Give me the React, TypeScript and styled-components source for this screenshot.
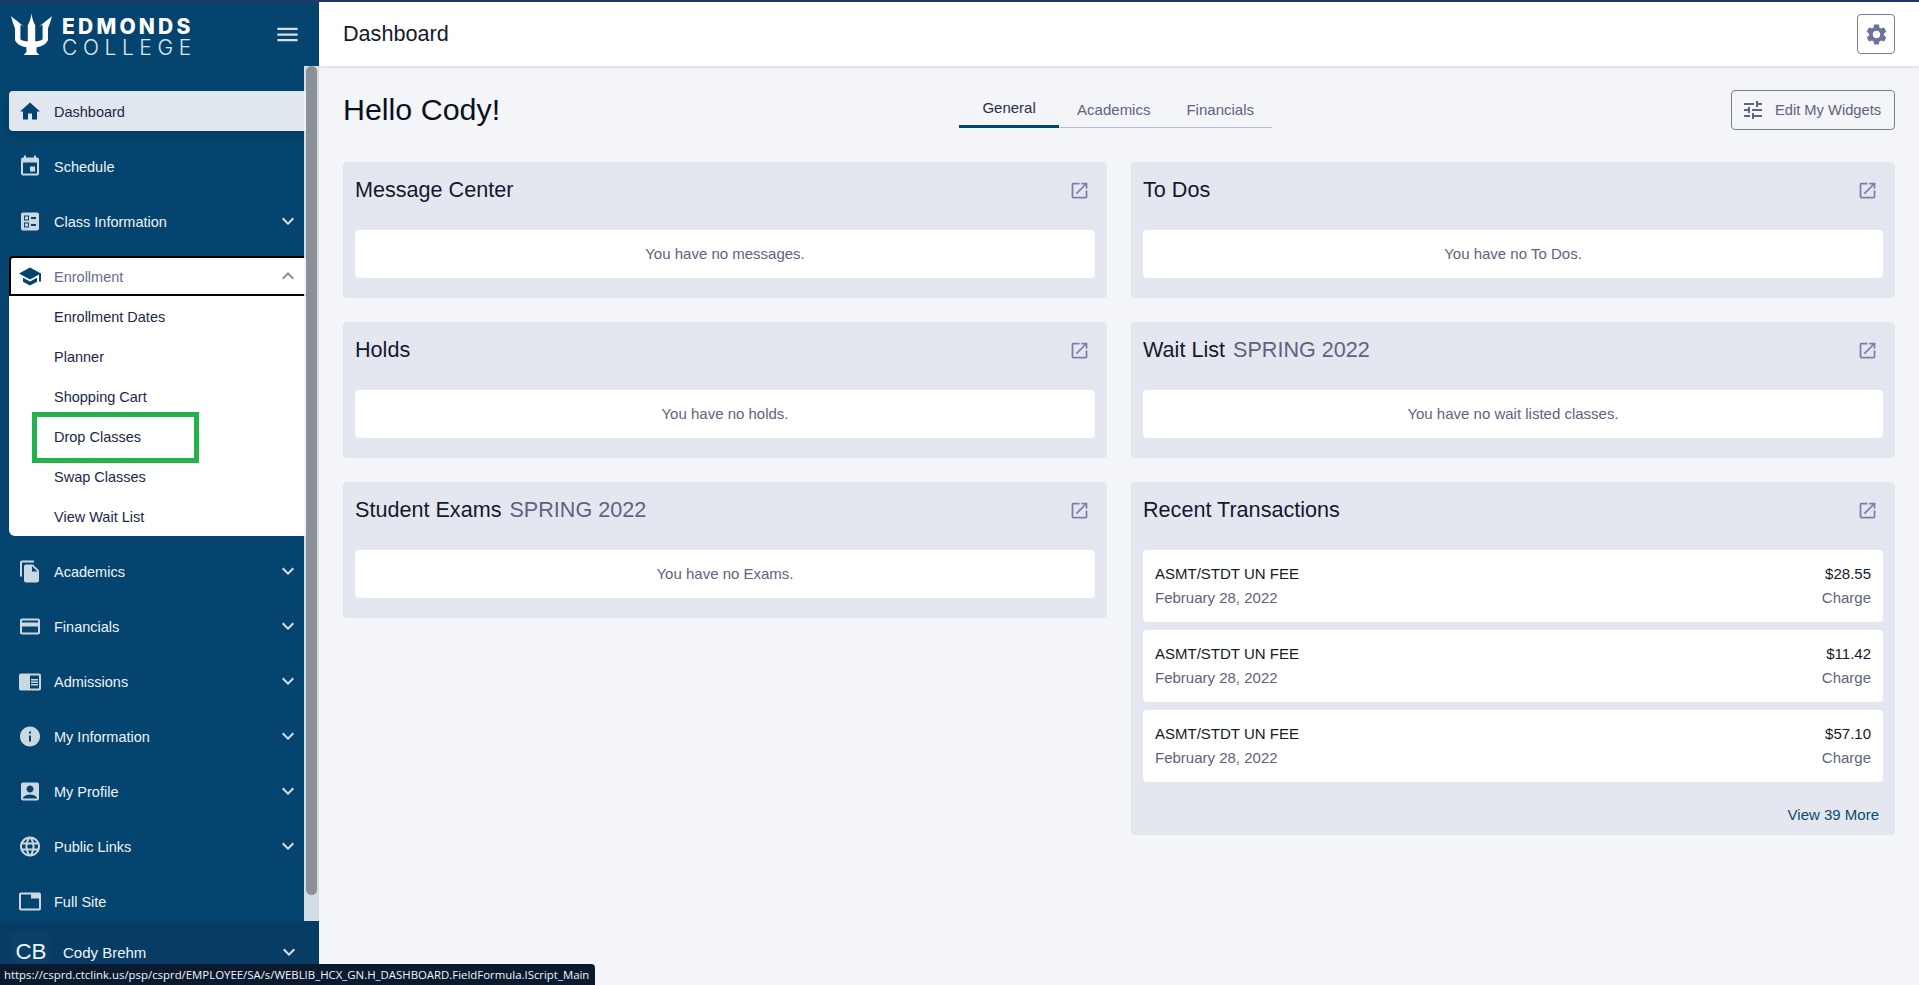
import React from 'react'
import styled, { createGlobalStyle } from 'styled-components'
import {
  MdHome, MdEvent, MdBallot, MdSchool, MdFileCopy, MdCreditCard, MdChromeReaderMode, MdInfo,
  MdAccountBox, MdLanguage, MdTab, MdKeyboardArrowDown, MdKeyboardArrowUp, MdMenu, MdSettings,
  MdTune, MdOpenInNew,
} from 'react-icons/md'

const GlobalStyle = createGlobalStyle`
  html, body { margin: 0; padding: 0; height: 100%; }
  body { font-family: "Liberation Sans", Arial, sans-serif; background: #f3f5f9; overflow: hidden; }
  #root { height: 100%; }
  * { box-sizing: border-box; }
`

const Shell = styled.div`
  position: relative;
  display: flex;
  height: 985px;
  border-top: 2px solid #1f3a64;
`
const Sidebar = styled.aside`
  width: 319px;
  flex: none;
  display: flex;
  flex-direction: column;
  background: #04446f;
  color: #eef3f7;
`
const Brand = styled.div`
  height: 64px;
  flex: none;
  display: flex;
  align-items: center;
  justify-content: space-between;
  padding: 0 18px 0 11px;
`
const LogoLink = styled.div`
  display: flex;
  align-items: center;
  gap: 10px;
`
const LogoWords = styled.div`
  display: flex;
  flex-direction: column;
  padding-top: 6px;
  color: #fff;
  font-family: Inter, "Liberation Sans", sans-serif;
  font-size: 21px;
  line-height: 21.5px;
`
const LogoTop = styled.span`
  font-weight: 800;
  letter-spacing: 3.2px;
`
const LogoBottom = styled.span`
  font-weight: 300;
  letter-spacing: 5.6px;
  color: #dfe8ee;
`
const MenuButton = styled.div`
  display: flex;
  color: #d5e0e8;
`
const NavArea = styled.div`
  position: relative;
  flex: 1;
  min-height: 0;
  overflow: hidden;
  padding: 25px 0 0 9px;
`
const ScrollTrack = styled.div`
  position: absolute;
  top: 0;
  right: 0;
  bottom: 0;
  width: 15px;
  background: rgba(240, 243, 246, 0.88);
  padding: 0 2px;
`
const ScrollThumb = styled.div`
  height: 829px;
  border-radius: 6px;
  background: #8b9097;
`
const NavRow = styled.div<{ $active?: boolean; $open?: boolean }>`
  width: 300px;
  height: 40px;
  margin-bottom: 15px;
  display: flex;
  align-items: center;
  gap: 12px;
  padding: 0 9px;
  font-size: 14.5px;
  border-radius: 4px;
  ${p => p.$active && `
    background: #e1e7ee;
    color: #1c2748;
    box-shadow: 0 4px 8px rgba(0, 0, 0, 0.12);
  `}
  ${p => p.$open && `
    margin-bottom: 0;
    background: #fff;
    color: #676c8c;
    border: 2px solid #000;
    padding: 0 7px;
    border-radius: 4px 4px 0 0;
  `}
`
const NavIcon = styled.span<{ $active?: boolean }>`
  width: 24px;
  height: 24px;
  flex: none;
  display: flex;
  align-items: center;
  justify-content: center;
  font-size: 25px;
  color: ${p => (p.$active ? '#04446f' : '#cbd8e2')};
`
const NavLabel = styled.span`
  flex: 1;
  padding-top: 1px;
`
const Chevron = styled.span<{ $up?: boolean }>`
  display: flex;
  font-size: 24px;
  color: ${p => (p.$up ? '#8a8fa8' : '#d5e0e8')};
`
const SubList = styled.div`
  width: 300px;
  margin-bottom: 15px;
  background: #fff;
  border-radius: 0 0 6px 6px;
`
const SubItem = styled.div`
  position: relative;
  height: 40px;
  display: flex;
  align-items: center;
  padding: 1px 0 0 45px;
  font-size: 14.5px;
  color: #1c2748;
`
const Highlight = styled.div`
  position: absolute;
  left: 23px;
  top: -4px;
  width: 167px;
  height: 51px;
  border: 5px solid #22b14c;
  pointer-events: none;
`
const UserBar = styled.div`
  height: 64px;
  flex: none;
  display: flex;
  align-items: center;
  padding: 0 18px 2px 11px;
  background: #073c64;
  font-size: 15px;
`
const Avatar = styled.div`
  width: 40px;
  height: 40px;
  display: flex;
  align-items: center;
  justify-content: center;
  margin-right: 12px;
  background: #0a3f67;
  font-size: 22.4px;
`
const StatusBar = styled.div`
  position: absolute;
  left: 0;
  bottom: 0;
  width: 595px;
  height: 21px;
  padding: 0 4px;
  display: flex;
  align-items: center;
  background: #0c1a30;
  color: #f2f4f7;
  border-radius: 0 4px 0 0;
  font-family: "Open Sans", "Noto Sans", sans-serif;
  font-size: 11.4px;
  white-space: nowrap;
`
const Main = styled.main`
  flex: 1;
  min-width: 0;
  display: flex;
  flex-direction: column;
`
const TopBar = styled.header`
  height: 64px;
  flex: none;
  display: flex;
  align-items: center;
  justify-content: space-between;
  padding: 0 24px;
  background: #fff;
  box-shadow: 0 1px 3px rgba(40, 50, 90, 0.15);
  font-size: 21.6px;
  color: #15192c;
`
const GearButton = styled.button`
  width: 38px;
  height: 40px;
  padding: 0;
  display: flex;
  align-items: center;
  justify-content: center;
  background: #fff;
  border: 1px solid #777d9d;
  border-radius: 4px;
  color: #6d739b;
  font-size: 25px;
`
const Content = styled.div`
  flex: 1;
  padding: 24px 24px 0;
`
const HeroRow = styled.div`
  height: 40px;
  margin-bottom: 32px;
  display: flex;
  align-items: center;
  justify-content: space-between;
`
const Greeting = styled.h1`
  margin: 0;
  padding-bottom: 2px;
  font-size: 30.4px;
  font-weight: 400;
  color: #0c0f1e;
`
const Tabs = styled.nav`
  align-self: flex-start;
  height: 38px;
  display: flex;
  border-bottom: 1px solid #b8bcd6;
`
const TabItem = styled.div<{ $active?: boolean }>`
  height: 38px;
  padding: 0 18px;
  min-width: ${p => (p.$active ? '100px' : '0')};
  display: flex;
  align-items: center;
  justify-content: center;
  font-size: 15px;
  color: ${p => (p.$active ? '#2a2f48' : '#5f6380')};
  border-bottom: ${p => (p.$active ? '3px solid #04446f' : '0')};
`
const EditButton = styled.button`
  width: 164px;
  height: 40px;
  display: flex;
  align-items: center;
  gap: 10px;
  padding: 0 0 0 9px;
  background: transparent;
  border: 1px solid #777d9d;
  border-radius: 4px;
  color: #5f6380;
  font-family: inherit;
  font-size: 14.7px;
`
const Columns = styled.div`
  display: grid;
  grid-template-columns: 1fr 1fr;
  gap: 24px;
  align-items: start;
`
const Column = styled.div`
  display: flex;
  flex-direction: column;
  gap: 24px;
`
const Card = styled.section`
  padding: 12px;
  background: #e4e7f0;
  border-radius: 4px;
`
const CardHead = styled.div`
  height: 56px;
  padding-bottom: 24px;
  display: flex;
  align-items: center;
  justify-content: space-between;
`
const CardTitle = styled.h2`
  margin: 0;
  font-size: 21.6px;
  font-weight: 400;
  color: #15192c;
`
const Term = styled.span`
  margin-left: 8px;
  color: #5f6380;
`
const OpenIcon = styled.span`
  display: flex;
  margin-right: 5px;
  font-size: 21px;
  color: #7a80aa;
`
const Empty = styled.div`
  height: 48px;
  margin-bottom: 8px;
  padding-bottom: 2px;
  display: flex;
  align-items: center;
  justify-content: center;
  background: #fff;
  border-radius: 4px;
  font-size: 15px;
  color: #5f6380;
`
const TxList = styled.div`
  display: flex;
  flex-direction: column;
  gap: 8px;
`
const TxRow = styled.div`
  height: 72px;
  padding: 11px 12px 13px;
  display: grid;
  grid-template-columns: 1fr auto;
  grid-auto-rows: 24px;
  align-items: center;
  background: #fff;
  border-radius: 4px;
  font-size: 15px;
  color: #15192c;
`
const TxMuted = styled.span<{ $right?: boolean }>`
  color: #5f6380;
  text-align: ${p => (p.$right ? 'right' : 'left')};
`
const TxAmount = styled.span`
  text-align: right;
`
const ViewMore = styled.div`
  margin-top: 25px;
  padding-right: 4px;
  line-height: 16px;
  text-align: right;
  font-size: 15px;
  color: #0b4a74;
`

const Trident = () => (
  <svg width="41" height="42" viewBox="0 0 122 125" fill="#fff" aria-hidden="true">
    <path d="M61 0 C62 12 65 24 74 40 L72 38 L72 84 C80 84 90 82 94 78 L94 35 L84 40 C96 30 110 20 122 10 C119 22 115 34 110 46 L110 80 C106 92 90 100 76 102 L76 116 L84 125 L38 125 L46 116 L46 102 C32 100 16 92 12 80 L12 46 C7 34 3 22 0 10 C12 20 26 30 38 40 L28 35 L28 78 C32 82 42 84 50 84 L50 38 L48 40 C57 24 60 12 61 0 Z" />
  </svg>
)

type NavEntry = { label: string; icon: React.ReactNode; more?: boolean }

const topNav: NavEntry[] = [
  { label: 'Schedule', icon: <MdEvent /> },
  { label: 'Class Information', icon: <MdBallot />, more: true },
]
const bottomNav: NavEntry[] = [
  { label: 'Academics', icon: <MdFileCopy />, more: true },
  { label: 'Financials', icon: <MdCreditCard />, more: true },
  { label: 'Admissions', icon: <MdChromeReaderMode />, more: true },
  { label: 'My Information', icon: <MdInfo />, more: true },
  { label: 'My Profile', icon: <MdAccountBox />, more: true },
  { label: 'Public Links', icon: <MdLanguage />, more: true },
  { label: 'Full Site', icon: <MdTab /> },
]
const enrollment = ['Enrollment Dates', 'Planner', 'Shopping Cart', 'Drop Classes', 'Swap Classes', 'View Wait List']
const transactions = ['$28.55', '$11.42', '$57.10']

const NavLine: React.FC<NavEntry> = ({ label, icon, more }) => (
  <NavRow>
    <NavIcon>{icon}</NavIcon>
    <NavLabel>{label}</NavLabel>
    {more && <Chevron><MdKeyboardArrowDown /></Chevron>}
  </NavRow>
)

const Widget: React.FC<{ title: string; term?: string; children: React.ReactNode }> = ({ title, term, children }) => (
  <Card>
    <CardHead>
      <CardTitle>{title}{term && <Term>{term}</Term>}</CardTitle>
      <OpenIcon><MdOpenInNew /></OpenIcon>
    </CardHead>
    {children}
  </Card>
)

export default function App() {
  return (
    <Shell>
      <GlobalStyle />
      <Sidebar>
        <Brand>
          <LogoLink>
            <Trident />
            <LogoWords>
              <LogoTop>EDMONDS</LogoTop>
              <LogoBottom>COLLEGE</LogoBottom>
            </LogoWords>
          </LogoLink>
          <MenuButton><MdMenu size={27} /></MenuButton>
        </Brand>
        <NavArea>
          <NavRow $active>
            <NavIcon $active><MdHome /></NavIcon>
            <NavLabel>Dashboard</NavLabel>
          </NavRow>
          {topNav.map(n => <NavLine key={n.label} {...n} />)}
          <NavRow $open>
            <NavIcon $active><MdSchool /></NavIcon>
            <NavLabel>Enrollment</NavLabel>
            <Chevron $up><MdKeyboardArrowUp /></Chevron>
          </NavRow>
          <SubList>
            {enrollment.map(s => (
              <SubItem key={s}>
                {s}
                {s === 'Drop Classes' && <Highlight />}
              </SubItem>
            ))}
          </SubList>
          {bottomNav.map(n => <NavLine key={n.label} {...n} />)}
          <ScrollTrack><ScrollThumb /></ScrollTrack>
        </NavArea>
        <UserBar>
          <Avatar>CB</Avatar>
          <NavLabel>Cody Brehm</NavLabel>
          <Chevron><MdKeyboardArrowDown /></Chevron>
        </UserBar>
      </Sidebar>
      <Main>
        <TopBar>
          Dashboard
          <GearButton aria-label="Settings"><MdSettings /></GearButton>
        </TopBar>
        <Content>
          <HeroRow>
            <Greeting>Hello Cody!</Greeting>
            <Tabs>
              <TabItem $active>General</TabItem>
              <TabItem>Academics</TabItem>
              <TabItem>Financials</TabItem>
            </Tabs>
            <EditButton><MdTune size={24} />Edit My Widgets</EditButton>
          </HeroRow>
          <Columns>
            <Column>
              <Widget title="Message Center"><Empty>You have no messages.</Empty></Widget>
              <Widget title="Holds"><Empty>You have no holds.</Empty></Widget>
              <Widget title="Student Exams" term="SPRING 2022"><Empty>You have no Exams.</Empty></Widget>
            </Column>
            <Column>
              <Widget title="To Dos"><Empty>You have no To Dos.</Empty></Widget>
              <Widget title="Wait List" term="SPRING 2022"><Empty>You have no wait listed classes.</Empty></Widget>
              <Widget title="Recent Transactions">
                <TxList>
                  {transactions.map(amount => (
                    <TxRow key={amount}>
                      <span>ASMT/STDT UN FEE</span>
                      <TxAmount>{amount}</TxAmount>
                      <TxMuted>February 28, 2022</TxMuted>
                      <TxMuted $right>Charge</TxMuted>
                    </TxRow>
                  ))}
                </TxList>
                <ViewMore>View 39 More</ViewMore>
              </Widget>
            </Column>
          </Columns>
        </Content>
      </Main>
      <StatusBar>https://csprd.ctclink.us/psp/csprd/EMPLOYEE/SA/s/WEBLIB_HCX_GN.H_DASHBOARD.FieldFormula.IScript_Main</StatusBar>
    </Shell>
  )
}
